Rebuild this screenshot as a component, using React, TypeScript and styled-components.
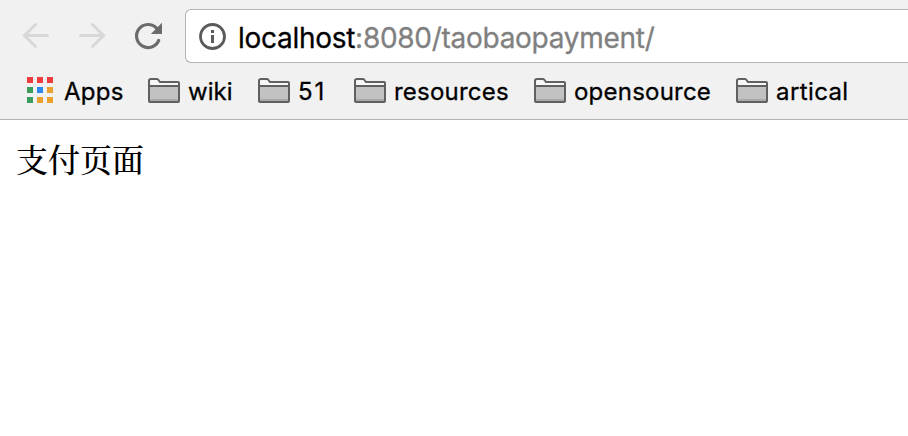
import React from "react";
import styled, { createGlobalStyle } from "styled-components";

const GlobalStyle = createGlobalStyle`
  * { box-sizing: border-box; }
  body { margin: 0; background: #fff; overflow: hidden; }
`;

const Browser = styled.div`
  width: 100%;
  height: 100vh;
  overflow: hidden;
  font-family: Inter, Roboto, sans-serif;
  color: #000;
`;

const Chrome = styled.header`
  height: 120px;
  background: #f1f1f1;
  border-bottom: 1px solid #b4b4b4;
`;

const Toolbar = styled.nav`
  display: flex;
  height: 63px;
  padding: 9px 0 0 21px;
`;

const NavButton = styled.button<{ $width: number }>`
  flex: none;
  width: ${(p) => p.$width}px;
  height: 54px;
  padding: 0;
  border: 0;
  background: none;
  svg { display: block; }
`;

const AddressBar = styled.div`
  flex: 1;
  display: flex;
  align-items: center;
  height: 54px;
  padding-left: 12px;
  background: #fff;
  border: 1px solid #b4b4b4;
  border-right: 0;
  border-radius: 6px 0 0 6px;
`;

const Address = styled.div`
  margin-left: 11px;
  padding-top: 3px;
  font-size: 28px;
  line-height: 36px;
  letter-spacing: -0.28px;
  white-space: nowrap;
  -webkit-text-stroke: 0.3px;
`;

const Path = styled.span`
  color: #808080;
`;

const Bookmarks = styled.nav`
  display: flex;
  height: 56px;
  padding-left: 26px;
`;

const Bookmark = styled.a<{ $width: number; $gap: number; $spacing: number }>`
  flex: none;
  display: flex;
  align-items: center;
  gap: ${(p) => p.$gap}px;
  width: ${(p) => p.$width}px;
  font-size: 24px;
  line-height: 30px;
  letter-spacing: ${(p) => p.$spacing}px;
  white-space: nowrap;
  svg { flex: none; }
`;

const Label = styled.span`
  padding-top: 2px;
  -webkit-text-stroke: 0.3px;
`;

const Page = styled.main`
  padding: 15px 16px;
  font-family: "Songti SC", "Noto Serif CJK SC", "Noto Sans CJK SC", serif;
  font-size: 32px;
  font-weight: 500;
  line-height: 47px;
`;

const Back = () => (
  <svg width="30" height="54" viewBox="21 9 30 54" fill="none" stroke="#d8d8d8" strokeWidth="3" strokeLinecap="round">
    <path d="M47.5 35.5H25M35.5 24.5l-11 11 11 11" />
  </svg>
);

const Forward = () => (
  <svg width="30" height="54" viewBox="77 9 30 54" fill="none" stroke="#d8d8d8" strokeWidth="3" strokeLinecap="round">
    <path d="M80.5 35.5H103M92.5 24.5l11 11-11 11" />
  </svg>
);

const Reload = () => (
  <svg width="32" height="54" viewBox="133 9 32 54">
    <path d="M156.5 28.2A11.5 11.5 0 1 0 158.7 40.4" fill="none" stroke="#6b6b6b" strokeWidth="3.2" strokeLinecap="round" />
    <path d="M162 22.8V34h-11.2z" fill="#6b6b6b" />
  </svg>
);

const Info = () => (
  <svg width="29" height="29" viewBox="0 0 29 29">
    <circle cx="14.5" cy="14.5" r="12" fill="none" stroke="#5a5a5a" strokeWidth="2.8" />
    <path d="M13 8h3v3h-3zM13 13h3v8h-3z" fill="#5a5a5a" />
  </svg>
);

const TILES = ["#ec3c3f", "#ec3c3f", "#ec3c3f", "#3c9c5c", "#2b88ef", "#eba12d", "#3c9c5c", "#eba12d", "#eba12d"];

const Apps = () => (
  <svg width="28" height="28" viewBox="0 0 28 28">
    {TILES.map((fill, i) => (
      <rect key={i} x={1 + (i % 3) * 10} y={Math.floor(i / 3) * 10} width="6" height="6" fill={fill} />
    ))}
  </svg>
);

const Folder = () => (
  <svg width="32" height="26" viewBox="0 0 32 26">
    <path d="M1 23V3q0-2 2-2h6.5q1 0 1.5 1l1 2h18q1 0 1 1v18q0 1-1 1H2q-1 0-1-1z" fill="#f7f7f7" />
    <path d="M2 9h28v14H2z" fill="#c2c2c2" />
    <path d="M2 21h28v2H2z" fill="#aaa" />
    <path d="M1 23V3q0-2 2-2h6q1 0 1.5 1l1.5 2h18q1 0 1 1v18q0 1-1 1H2q-1 0-1-1zM1 8h30" fill="none" stroke="#606060" strokeWidth="2" />
  </svg>
);

const FOLDERS = [
  { name: "wiki", width: 110, spacing: 0 },
  { name: "51", width: 96, spacing: 2 },
  { name: "resources", width: 180, spacing: 0.22 },
  { name: "opensource", width: 202, spacing: 0.22 },
  { name: "artical", width: 140, spacing: 0.4 },
];

export default function App() {
  return (
    <Browser>
      <GlobalStyle />
      <Chrome>
        <Toolbar>
          <NavButton $width={56} aria-label="Back"><Back /></NavButton>
          <NavButton $width={56} aria-label="Forward"><Forward /></NavButton>
          <NavButton $width={52} aria-label="Reload"><Reload /></NavButton>
          <AddressBar>
            <Info />
            <Address>localhost<Path>:8080/taobaopayment/</Path></Address>
          </AddressBar>
        </Toolbar>
        <Bookmarks>
          <Bookmark $width={122} $gap={10} $spacing={0.25}><Apps /><Label>Apps</Label></Bookmark>
          {FOLDERS.map((f) => (
            <Bookmark key={f.name} $width={f.width} $gap={8} $spacing={f.spacing}>
              <Folder /><Label>{f.name}</Label>
            </Bookmark>
          ))}
        </Bookmarks>
      </Chrome>
      <Page>支付页面</Page>
    </Browser>
  );
}
